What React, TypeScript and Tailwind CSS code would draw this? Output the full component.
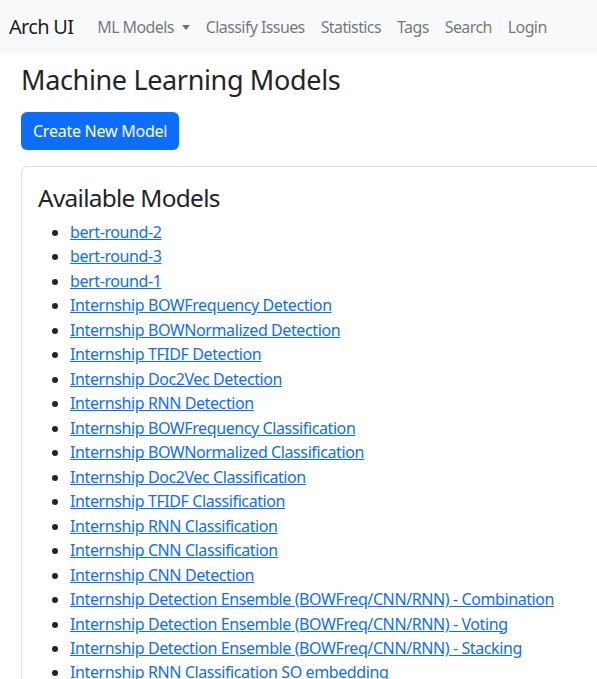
import React from "react";

const models = [
  "bert-round-2",
  "bert-round-3",
  "bert-round-1",
  "Internship BOWFrequency Detection",
  "Internship BOWNormalized Detection",
  "Internship TFIDF Detection",
  "Internship Doc2Vec Detection",
  "Internship RNN Detection",
  "Internship BOWFrequency Classification",
  "Internship BOWNormalized Classification",
  "Internship Doc2Vec Classification",
  "Internship TFIDF Classification",
  "Internship RNN Classification",
  "Internship CNN Classification",
  "Internship CNN Detection",
  "Internship Detection Ensemble (BOWFreq/CNN/RNN) - Combination",
  "Internship Detection Ensemble (BOWFreq/CNN/RNN) - Voting",
  "Internship Detection Ensemble (BOWFreq/CNN/RNN) - Stacking",
  "Internship RNN Classification SO embedding",
  "Internship CNN Classification SO embedding",
];

const navLinks = ["Classify Issues", "Statistics", "Tags", "Search", "Login"];

export default function App() {
  return (
    <div
      className="w-[597px] h-[679px] overflow-hidden bg-white text-[#212529]"
      style={{ fontFamily: '"Noto Sans", "Open Sans", sans-serif' }}
    >
      {/* Navbar */}
      <nav className="h-[54px] bg-[#f8f9fa] flex items-center pl-[9px]">
        <span className="text-[20px] tracking-[-0.7px] mr-[16px] text-black/90">Arch UI</span>
        <div className="flex items-center text-[16px] tracking-[-0.6px] text-black/55">
          <span className="px-2 flex items-center">
            ML Models
            <span className="ml-[8px] w-0 h-0 border-x-[4.5px] border-x-transparent border-t-[5px] border-t-black/55" />
          </span>
          {navLinks.map((l) => (
            <span key={l} className="px-2">
              {l}
            </span>
          ))}
        </div>
      </nav>

      <main className="pl-[21px]">
        <h2 className="text-[27px] tracking-[-0.35px] leading-[32px] mt-[10px] mb-[16px]">
          Machine Learning Models
        </h2>
        <button className="h-[38px] px-[12px] bg-[#0d6efd] text-white text-[16px] tracking-[-0.25px] rounded-[6px] mb-[16px]">
          Create New Model
        </button>

        <div className="w-[640px] border border-[#dfdfdf] rounded-[6px] p-4">
          <h3 className="text-[24.4px] tracking-[-0.7px] leading-[29px] mb-2">Available Models</h3>
          <ul className="list-disc pl-8 text-[16px] tracking-[-0.4px] leading-[24.47px]">
            {models.map((m) => (
              <li key={m}>
                <a href="#" className="text-[#0d6efd] underline">
                  {m}
                </a>
              </li>
            ))}
          </ul>
        </div>
      </main>
    </div>
  );
}
